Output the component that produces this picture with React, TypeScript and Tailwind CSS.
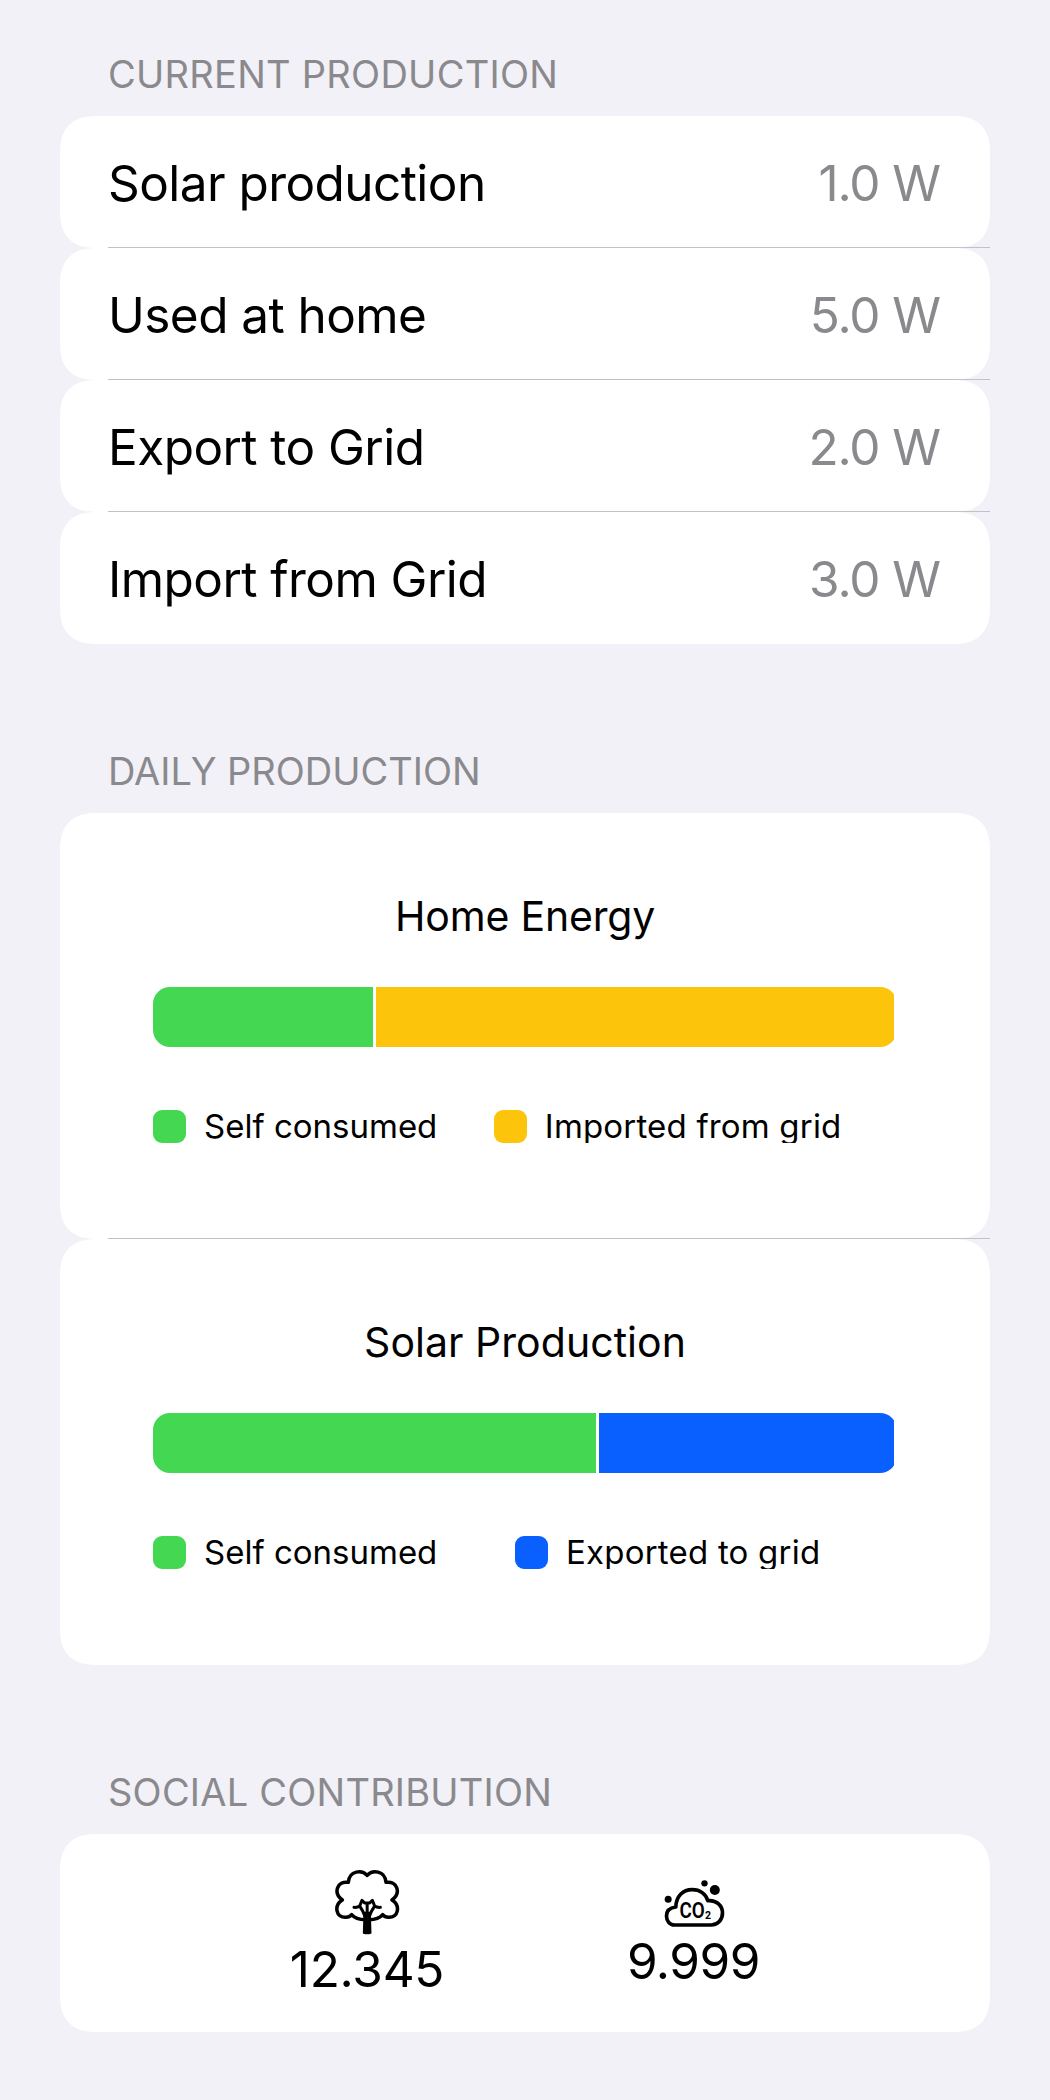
import type { ReactNode } from 'react';

const readings = [
  { label: 'Solar production', value: '1.0 W' },
  { label: 'Used at home', value: '5.0 W' },
  { label: 'Export to Grid', value: '2.0 W' },
  { label: 'Import from Grid', value: '3.0 W' },
];

type ChartProps = {
  title: string;
  titleClass: string;
  share: number;
  color: string;
  legend: string;
  legendClass: string;
};

const charts: ChartProps[] = [
  {
    title: 'Home Energy',
    titleClass: 'tracking-[-0.19px]',
    share: 220,
    color: 'bg-[#fcc40a]',
    legend: 'Imported from grid',
    legendClass: 'tracking-[0.18px]',
  },
  {
    title: 'Solar Production',
    titleClass: 'tracking-[0.04px]',
    share: 443,
    color: 'bg-[#0a60ff]',
    legend: 'Exported to grid',
    legendClass: 'tracking-[0.22px]',
  },
];

function Section({ title, tracking, children }: { title: string; tracking: string; children: ReactNode }) {
  return (
    <section>
      <h2 className={`mb-4 pl-12 text-[38px] leading-[52px] text-[#8a8a8e] ${tracking}`}>{title}</h2>
      {children}
    </section>
  );
}

function Card({ divider = false, className, children }: { divider?: boolean; className: string; children: ReactNode }) {
  return (
    <div className="relative">
      <div
        className={`rounded-[32px] bg-white supports-[corner-shape:squircle]:rounded-[38px] supports-[corner-shape:squircle]:[corner-shape:superellipse(1.35)] ${className}`}
      >
        {children}
      </div>
      {divider && <div className="absolute right-0 bottom-0 left-12 h-px bg-[#c2c2c6]" />}
    </div>
  );
}

function Swatch({ color }: { color: string }) {
  return <span className={`size-[33px] shrink-0 rounded-[9px] ${color}`} />;
}

function EnergyChart({ title, titleClass, share, color, legend, legendClass }: ChartProps) {
  return (
    <>
      <h3 className={`text-center text-[41px] leading-[50px] ${titleClass}`}>{title}</h3>
      <div className="mt-[46px] flex h-[60px] gap-[3px] overflow-hidden rounded-[17px] pr-[3px]">
        <div className="bg-[#44d752]" style={{ width: share }} />
        <div className={`flex-1 ${color}`} />
      </div>
      <div className="mt-[63px] flex h-[33px] text-[33px] leading-[33px]">
        <div className="flex gap-[18px] overflow-hidden">
          <Swatch color="bg-[#44d752]" />
          <span>Self consumed</span>
        </div>
        <div className="flex flex-1 justify-center gap-[18px] overflow-hidden pl-px">
          <Swatch color={color} />
          <span className={legendClass}>{legend}</span>
        </div>
      </div>
    </>
  );
}

function TreeIcon() {
  return (
    <svg viewBox="6 27 270 198" className="h-[66px] w-[90px]" fill="none" stroke="#000" strokeLinejoin="round" strokeLinecap="round">
      <path
        strokeWidth="10.5"
        d="M141.5 46C127 29 88 30 85 67C52 62 38 98 67 120C41 136 47 174 78 172C85 172 91 169 95 164C104 175 121 180 141.5 179C162 180 179 175 188 164C192 169 198 172 205 172C236 174 242 136 216 120C245 98 231 62 198 67C195 30 156 29 141.5 46Z"
      />
      <path
        strokeWidth="9"
        d="M102 142Q112 143 119 138L126 121L134 129H149L157 121L164 138Q171 143 181 142M119 138Q128 150 136 172M164 138Q155 150 147 172M141.5 130V172"
      />
      <path fill="#000" strokeWidth="5" d="M133 158H150L152 219Q141.5 222 131 219Z" />
    </svg>
  );
}

function Co2Icon() {
  return (
    <svg viewBox="-4.5 60 270 141" className="h-[47px] w-[90px]">
      <path
        fill="none"
        stroke="#000"
        strokeWidth="11"
        strokeLinejoin="round"
        d="M72 195H182C202 195 216 179 216 159C216 137 197 119 172 122C166 103 149 89 125 89C97 89 77 109 76 141C58 143 48 153 48 168C48 184 58 195 72 195Z"
      />
      <circle cx="53" cy="118" r="10.5" />
      <circle cx="162" cy="70" r="9.5" />
      <circle cx="193" cy="90" r="15" />
      <text x="87" y="174" fontSize="64" textLength="76" lengthAdjust="spacingAndGlyphs" className="font-['Roboto',sans-serif] font-semibold">
        CO
      </text>
      <text x="163.5" y="178" fontSize="31" textLength="18" lengthAdjust="spacingAndGlyphs" className="font-['Roboto',sans-serif] font-bold">
        2
      </text>
    </svg>
  );
}

export default function App() {
  return (
    <main className="flex h-[2100px] w-[1050px] flex-col gap-[101px] bg-[#f2f1f7] px-[60px] pt-12 font-['Inter',sans-serif] text-black">
      <Section title="CURRENT PRODUCTION" tracking="tracking-[0.27px]">
        {readings.map(({ label, value }, i) => (
          <Card
            key={label}
            divider={i < readings.length - 1}
            className="flex h-[132px] items-center justify-between pt-0.5 pr-[50px] pl-12 text-[49.5px]"
          >
            <span className="tracking-[-0.56px]">{label}</span>
            <span className="tracking-[-1.1px] text-[#8a8a8e]">{value}</span>
          </Card>
        ))}
      </Section>

      <Section title="DAILY PRODUCTION" tracking="tracking-[-0.02px]">
        {charts.map((chart, i) => (
          <Card key={chart.title} divider={i < charts.length - 1} className="h-[426px] px-[93px] pt-[78px]">
            <EnergyChart {...chart} />
          </Card>
        ))}
      </Section>

      <Section title="SOCIAL CONTRIBUTION" tracking="tracking-[0.22px]">
        <Card className="flex h-[198px] gap-[126.5px] pl-[207px] text-[49.5px] leading-[60px]">
          <div className="flex w-[200px] flex-col items-center gap-1 pt-[35px]">
            <TreeIcon />
            <span className="tracking-[-0.24px]">12.345</span>
          </div>
          <div className="flex w-[200px] flex-col items-center gap-1 pt-[46px]">
            <Co2Icon />
            <span className="tracking-[-0.44px]">9.999</span>
          </div>
        </Card>
      </Section>
    </main>
  );
}
